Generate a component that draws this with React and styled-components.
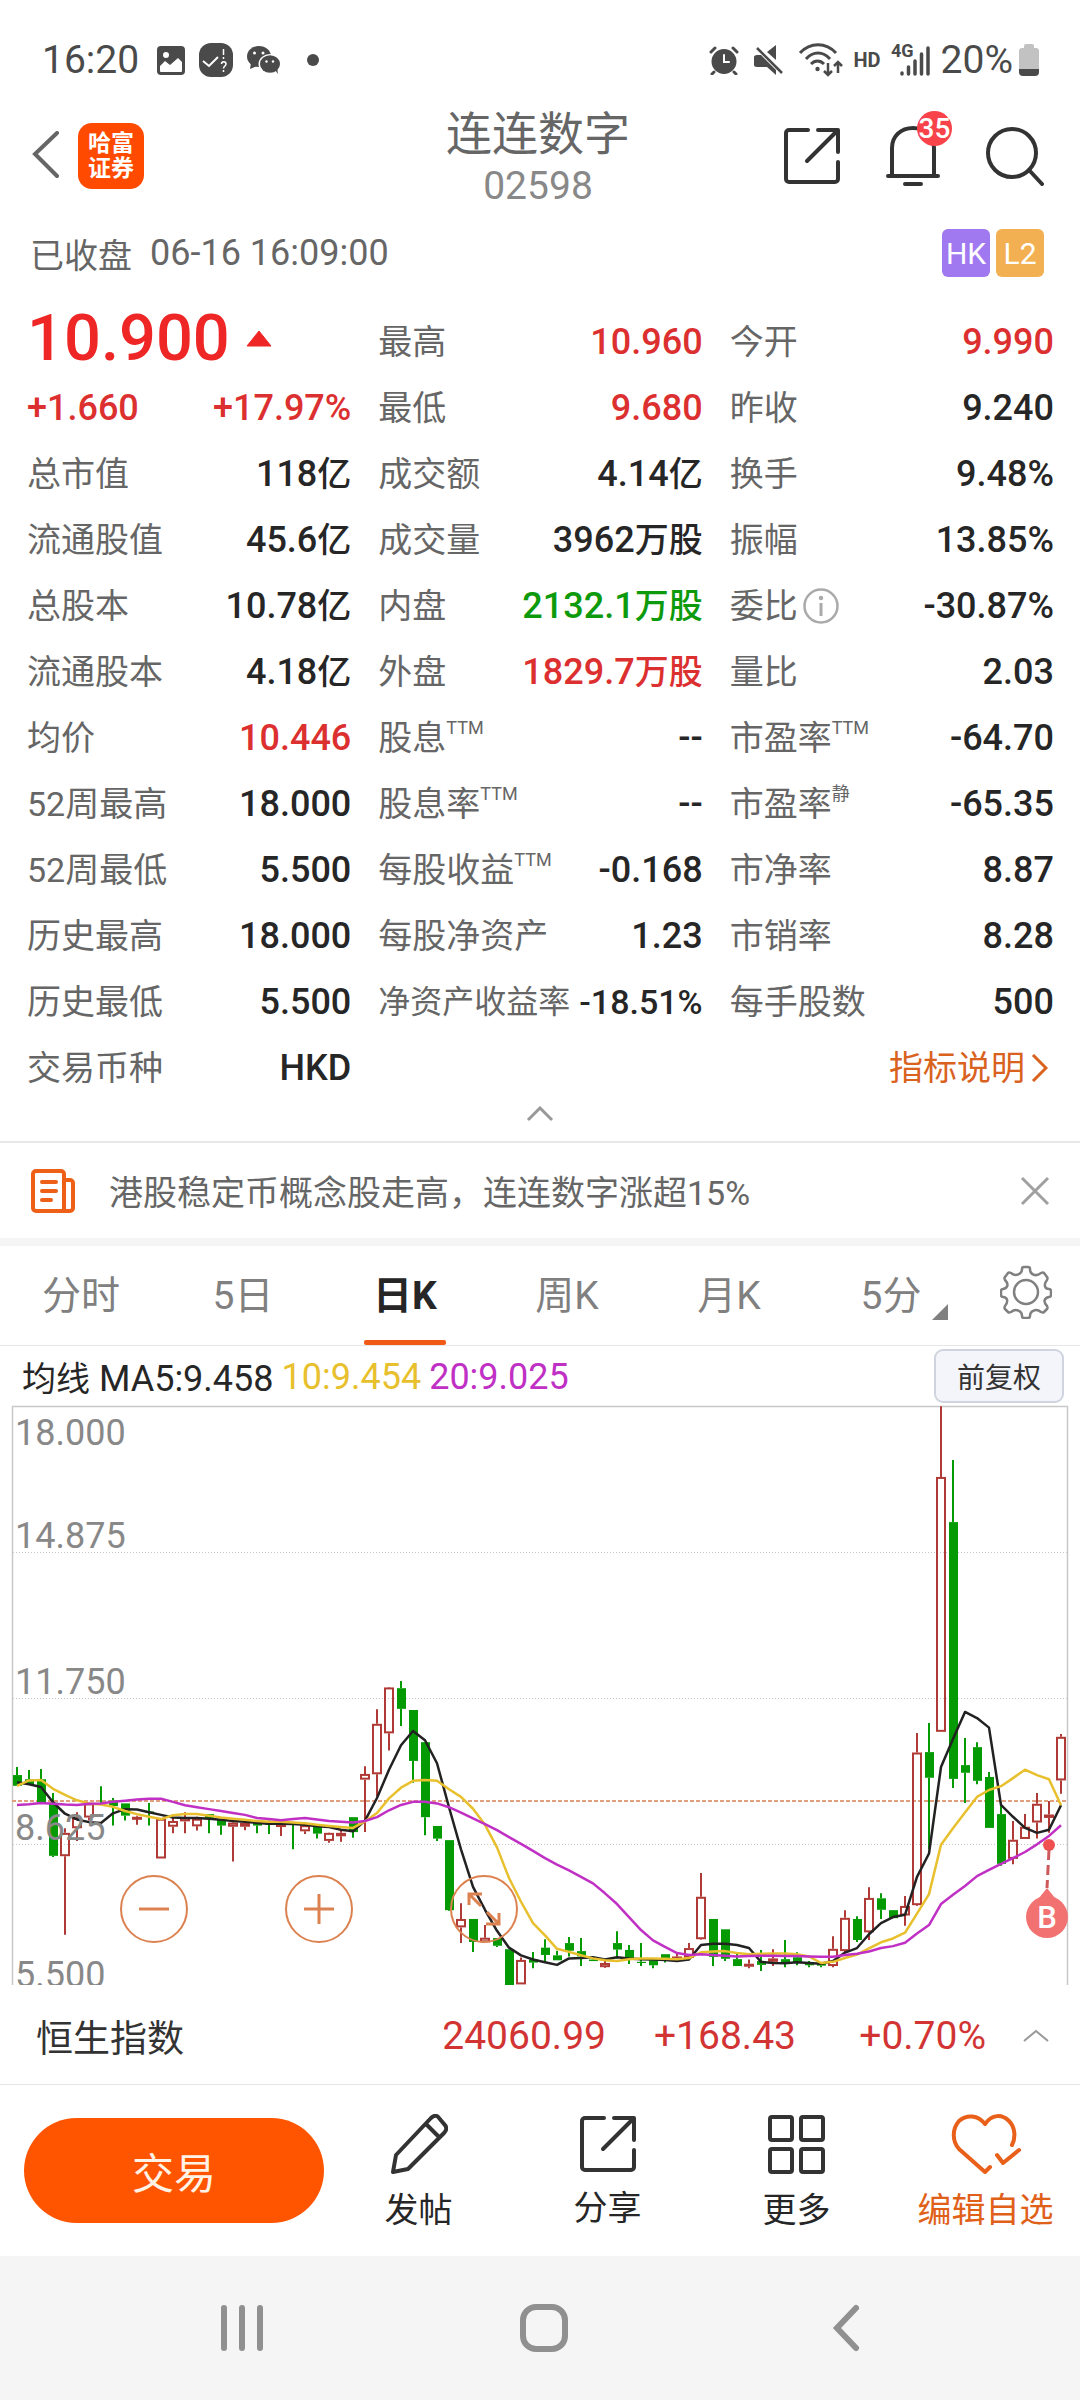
import { useState } from "react";
import styled, { createGlobalStyle } from "styled-components";

const GlobalStyle = createGlobalStyle`
  * {
    box-sizing: border-box;
  }
  body {
    margin: 0;
    background: #fff;
    color: #262626;
    font-family: Roboto, "Noto Sans CJK SC", sans-serif;
  }
  button {
    padding: 0;
    border: none;
    background: none;
    color: inherit;
    font: inherit;
    cursor: pointer;
  }
  svg {
    display: block;
  }
`;

const Page = styled.div`
  display: flex;
  flex-direction: column;
  width: 100%;
`;

const StatusBar = styled.div`
  display: flex;
  align-items: center;
  justify-content: space-between;
  height: 80px;
  padding: 40px 41px 0 42px;
  color: #4a4a4a;
  font-size: 39px;
  line-height: 40px;
`;

const StatusGroup = styled.div`
  display: flex;
  align-items: center;
  gap: ${(props) => props.$gap};
`;

const Clock = styled.span`
  margin-right: 4px;
`;

const StatusTag = styled.span`
  font-size: 20px;
  font-weight: 700;
`;

const Header = styled.header`
  display: grid;
  grid-template-columns: 1fr auto 1fr;
  align-items: center;
  height: 140px;
  padding: 12px 36px 0 32px;
`;

const HeaderSide = styled.div`
  display: flex;
  align-items: center;
  justify-content: ${(props) => (props.$end ? "flex-end" : "flex-start")};
  gap: ${(props) => (props.$end ? "46px" : "18px")};
`;

const BrokerLogo = styled.div`
  display: flex;
  align-items: center;
  justify-content: center;
  width: 66px;
  height: 66px;
  border-radius: 14px;
  background: #ff4a00;
  color: #fff;
  font-size: 23px;
  font-weight: 700;
  line-height: 25px;
  text-align: center;
`;

const Title = styled.h1`
  display: flex;
  flex-direction: column;
  align-items: center;
  margin: 0;
  padding-top: 3px;
  color: #666;
  font-size: 46px;
  font-weight: 400;
  line-height: 56px;
  & span {
    color: #888;
    font-size: 39px;
    line-height: 48px;
  }
`;

const IconButton = styled.button`
  position: relative;
  display: flex;
  align-items: center;
  justify-content: center;
`;

const Badge = styled.span`
  position: absolute;
  top: -15px;
  right: -12px;
  width: 35px;
  height: 35px;
  border-radius: 50%;
  background: #f9434b;
  color: #fff;
  font-size: 28px;
  font-weight: 500;
  line-height: 35px;
  text-align: center;
`;

const SessionRow = styled.div`
  display: flex;
  align-items: center;
  gap: 18px;
  height: 66px;
  padding: 0 36px 0 30px;
  color: #666;
  font-size: 36px;
`;

const MarketTags = styled.div`
  display: flex;
  gap: 6px;
  margin-left: auto;
`;

const MarketTag = styled.span`
  width: 48px;
  height: 48px;
  border-radius: 6px;
  background: ${(props) => props.$bg};
  color: #fff;
  font-size: 30px;
  line-height: 49px;
  text-align: center;
`;

const Cjk = styled.span`
  font-size: 34px;
`;

const QuoteGrid = styled.div`
  display: grid;
  grid-template-columns: repeat(3, 1fr);
  grid-auto-rows: 66px;
  column-gap: 27px;
  padding: 23px 26px 0 27px;
`;

const Cell = styled.div`
  display: flex;
  align-items: center;
  justify-content: space-between;
  line-height: 66px;
  white-space: nowrap;
`;

const PriceCell = styled.div`
  display: flex;
  align-items: center;
  gap: 16px;
  height: 58px;
  color: #ee2626;
  font-size: 65px;
  font-weight: 500;
  line-height: 58px;
`;

const Label = styled.span`
  display: flex;
  align-items: center;
  color: #666;
  font-size: ${(props) => (props.$small ? "32px" : "34px")};
  & sup {
    align-self: flex-start;
    font-size: 18px;
    line-height: 46px;
  }
  & svg {
    margin-left: 4px;
  }
`;

const tones = { up: "#dc3030", down: "#0d9a0d" };

const Value = styled.span`
  color: ${(props) => tones[props.$tone] || "#262626"};
  font-size: ${(props) => (props.$small ? "34px" : "36px")};
  font-weight: 500;
`;

const GuideLink = styled.a`
  display: flex;
  align-items: center;
  gap: 6px;
  margin-left: auto;
  padding-right: 6px;
  color: #d9621e;
  font-size: 34px;
  text-decoration: none;
`;

const Collapse = styled.button`
  display: flex;
  justify-content: center;
  height: 40px;
  padding-top: 5px;
`;

const News = styled.div`
  display: flex;
  align-items: center;
  height: 105px;
  padding: 0 30px;
  border-top: 2px solid #e8e8e8;
  border-bottom: 8px solid #f5f5f5;
  color: #666;
  font-size: 34px;
  & a {
    flex: 1;
    margin-left: 33px;
    color: inherit;
    text-decoration: none;
  }
`;

const Tabs = styled.nav`
  display: grid;
  grid-template-columns: repeat(6, 3fr) 2fr;
  height: 100px;
  border-bottom: 1px solid #e6e6e6;
`;

const Tab = styled.button`
  position: relative;
  padding-bottom: 8px;
  color: ${(props) => (props.$active ? "#262626" : "#808080")};
  font-size: 39px;
  font-weight: ${(props) => (props.$active ? 700 : 400)};
  &::after {
    content: "";
    position: absolute;
    left: calc(50% - 41px);
    bottom: 0;
    width: 82px;
    height: 5px;
    border-radius: 2px;
    background: ${(props) => (props.$active ? "#f05a14" : "transparent")};
  }
`;

const TabCorner = styled.svg`
  position: absolute;
  right: 24px;
  bottom: 25px;
`;

const GearButton = styled(IconButton)`
  padding-bottom: 8px;
`;

const AverageRow = styled.div`
  display: flex;
  align-items: center;
  gap: 8px;
  height: 59px;
  padding: 0 16px 0 22px;
  font-size: 36px;
`;

const Average = styled.span`
  padding-top: 2px;
  color: ${(props) => props.$color};
  white-space: nowrap;
`;

const AdjustButton = styled.button`
  width: 130px;
  height: 54px;
  margin-left: auto;
  border: 2px solid #d0d4de;
  border-radius: 9px;
  background: #f4f5fa;
  color: #333;
  font-size: 28px;
`;

const ChartBox = styled.section`
  position: relative;
`;

const ChartSvg = styled.svg`
  width: 100%;
  height: auto;
`;

const ChartControls = styled.div`
  position: absolute;
  bottom: 42px;
  left: 120px;
  display: flex;
  gap: 97px;
`;

const RoundButton = styled.button`
  display: flex;
  align-items: center;
  justify-content: center;
  width: 68px;
  height: 68px;
  border: 2px solid #dc8250;
  border-radius: 50%;
`;

const IndexBar = styled.div`
  display: grid;
  grid-template-columns: 1fr 200px 190px 190px 64px;
  align-items: center;
  height: 100px;
  padding: 2px 30px 0 36px;
  border-bottom: 1px solid #e6e6e6;
  color: #d23434;
  font-size: 39px;
  text-align: right;
`;

const IndexName = styled.span`
  color: #333;
  font-size: 37px;
  text-align: left;
`;

const IndexToggle = styled.button`
  display: flex;
  justify-content: flex-end;
`;

const BottomBar = styled.div`
  display: grid;
  grid-template-columns: 300px repeat(4, 1fr);
  align-items: center;
  height: 171px;
  padding-left: 24px;
`;

const TradeButton = styled.button`
  height: 105px;
  border-radius: 53px;
  background: #ff5500;
  color: #fff3e6;
  font-size: 42px;
`;

const Action = styled.button`
  display: flex;
  flex-direction: column;
  align-items: center;
  gap: 12px;
  padding-top: 6px;
  color: ${(props) => (props.$accent ? "#e0601a" : "#262626")};
  font-size: 34px;
  line-height: 48px;
`;

const SystemNav = styled.nav`
  display: grid;
  grid-template-columns: repeat(3, 1fr);
  height: 144px;
  padding: 0 83px 0 91px;
  background: #f5f5f5;
`;

const ImageIcon = () => (
  <svg width="28" height="29" viewBox="0 0 28 29">
    <rect width="28" height="29" rx="4" fill="#4a4a4a" />
    <circle cx="9" cy="9" r="3" fill="#fff" />
    <path d="M3 20l5-5 5 4 8-7 4 4v9a1 1 0 0 1-1 1H4a1 1 0 0 1-1-1z" fill="#fff" />
  </svg>
);

const CheckAppIcon = () => (
  <svg width="34" height="34" viewBox="0 0 34 34" fill="none" stroke="#fff">
    <rect width="34" height="34" rx="12" fill="#4a4a4a" stroke="none" />
    <path d="M4 18l6 5 9-9" strokeWidth="2" />
    <path d="M24.500 6v6M24.500 14v2M22.500 21c0-3 4.500-3 4.500 0 0 2-2.500 2-2.500 4.500M24.500 27v2" strokeWidth="1.500" />
  </svg>
);

const WechatIcon = () => (
  <svg width="34" height="28" viewBox="0 0 34 28" fill="#4a4a4a">
    <ellipse cx="12" cy="10.500" rx="12" ry="10.500" />
    <path d="M4 17l-1 6 7-3z" />
    <ellipse cx="23" cy="18" rx="11.500" ry="10" fill="#fff" />
    <ellipse cx="23" cy="18" rx="10" ry="8.800" />
    <path d="M28 24l3 4-1-7z" />
    <g fill="#fff">
      <circle cx="7.500" cy="7" r="1.500" />
      <circle cx="16" cy="7" r="1.500" />
      <circle cx="19.500" cy="15.500" r="1.200" />
      <circle cx="26" cy="15.500" r="1.200" />
    </g>
  </svg>
);

const DotIcon = () => (
  <svg width="24" height="12" viewBox="0 0 24 12">
    <circle cx="18" cy="6" r="6" fill="#4a4a4a" />
  </svg>
);

const AlarmIcon = () => (
  <svg width="30" height="29" viewBox="0 0 30 29" fill="none" strokeLinecap="round">
    <circle cx="15" cy="15.500" r="12.500" fill="#4a4a4a" />
    <path d="M2 6l4-4M28 6l-4-4M5 26l-2 2M25 26l2 2" stroke="#4a4a4a" strokeWidth="3" />
    <path d="M15 9v7h5" stroke="#fff" strokeWidth="2" />
  </svg>
);

const MuteIcon = () => (
  <svg width="30" height="30" viewBox="0 0 30 30" fill="#4a4a4a">
    <path d="M3 10h4l15 15v5l-9-8H3c-2 0-3-1-3-2v-8c0-1 1-2 3-2z" />
    <path d="M13 7l9-7v15z" />
    <path d="M3 3l25 25" stroke="#4a4a4a" strokeWidth="2.500" />
  </svg>
);

const WifiIcon = () => (
  <svg width="44" height="34" viewBox="0 0 44 34" fill="none" stroke="#4a4a4a" strokeWidth="3">
    <path d="M1 10C11-1 27-1 37 10M7 16c7-8 17-8 24 0M12 21c4-4 9-4 13 0" />
    <circle cx="18.500" cy="26" r="2.200" fill="#4a4a4a" stroke="none" />
    <path d="M29 20v12M25 28l4 4 4-4M39 30V19M35 23l4-4 4 4" strokeWidth="2.500" />
  </svg>
);

const SignalIcon = () => (
  <svg width="40" height="42" viewBox="0 -4 40 42">
    <text x="0" y="14" fontSize="18" fontWeight="700" fill="#4a4a4a">
      4G
    </text>
    <g stroke="#4a4a4a" strokeWidth="3.500" strokeLinecap="round">
      <path d="M11 31v-1M17.500 31v-7M24 31V18M30.500 31V11M37 31V5" />
    </g>
  </svg>
);

const BatteryIcon = () => (
  <svg width="20" height="32" viewBox="0 0 20 32">
    <path d="M5 4V2a2 2 0 0 1 2-2h6a2 2 0 0 1 2 2v2h2a3 3 0 0 1 3 3v18H0V7a3 3 0 0 1 3-3z" fill="#c2c2c2" />
    <path d="M0 25h20v3a4 4 0 0 1-4 4H4a4 4 0 0 1-4-4z" fill="#4a4a4a" />
  </svg>
);

const BackIcon = () => (
  <svg width="28" height="50" viewBox="0 0 28 50" fill="none" stroke="#666" strokeWidth="4" strokeLinecap="round">
    <path d="M25 2L3 23l22 22" />
  </svg>
);

const ShareIcon = () => (
  <svg width="56" height="56" viewBox="0 0 56 56" fill="none" stroke="#333" strokeWidth="4" strokeLinecap="round" strokeLinejoin="round">
    <path d="M24 2H5a3 3 0 0 0-3 3v46a3 3 0 0 0 3 3h46a3 3 0 0 0 3-3V34M34 2h20v22M53 3L23 33" />
  </svg>
);

const BellIcon = () => (
  <svg width="54" height="60" viewBox="0 0 54 60" fill="none" stroke="#333" strokeWidth="4" strokeLinecap="round">
    <path d="M6 49V22C6 10 15 2 27 2s21 8 21 20v27M2 50h50M19 58h16" />
  </svg>
);

const SearchIcon = () => (
  <svg width="58" height="60" viewBox="0 0 58 60" fill="none" stroke="#333" strokeWidth="4" strokeLinecap="round">
    <circle cx="26" cy="27" r="24" />
    <path d="M43 44l13 14" />
  </svg>
);

const InfoIcon = () => (
  <svg width="38" height="38" viewBox="0 0 38 38" fill="none" stroke="#aaa" strokeWidth="2.500">
    <circle cx="19" cy="19" r="16.500" />
    <path d="M19 16v13" strokeWidth="3" />
    <circle cx="19" cy="11" r="1" fill="#aaa" />
  </svg>
);

const NewsIcon = () => (
  <svg width="46" height="44" viewBox="0 0 46 44" fill="none" stroke="#ee5f18" strokeWidth="4" strokeLinecap="round" strokeLinejoin="round">
    <path d="M36 42H6a3 3 0 0 1-3-3V5a3 3 0 0 1 3-3h25a3 3 0 0 1 3 3v36M36 11h4a3 3 0 0 1 3 3v25a3 3 0 0 1-3 3h-4M12 13h14M12 22h14M12 31h9" />
  </svg>
);

const GearIcon = () => (
  <svg width="52" height="54" viewBox="0 0 52 54" fill="none" stroke="#808080" strokeWidth="2.500" strokeLinejoin="round">
    <circle cx="26" cy="27" r="12" />
    <path d="M22 4q0-2 2-2h4q2 0 2 2c0 6 6 8 11 4q2-1 3 0l3 4q1 1 0 3c-4 5-2 9 2 9q2 0 2 2v4q0 2-2 2c-5 1-6 5-2 9q1 2 0 3l-3 3q-1 1-3 0c-5-4-11-1-11 4q0 2-2 2h-4q-2 0-2-2c0-5-6-8-11-4q-2 1-3 0l-3-3q-1-1 0-3c4-5 2-9-2-9q-2 0-2-2v-4q0-2 2-2c5-1 6-5 2-9q-1-2 0-3l3-4q1-1 3 0c5 4 11 1 11-4z" />
  </svg>
);

const PencilIcon = () => (
  <svg width="58" height="60" viewBox="0 0 58 60" fill="none" stroke="#333" strokeWidth="4" strokeLinejoin="round">
    <path d="M41 4c3-3 6-3 8 0l5 6c3 3 3 6 0 9L18 55 3 58l3-17zM36 10l13 13" />
  </svg>
);

const GridIcon = () => (
  <svg width="58" height="60" viewBox="0 0 58 60" fill="none" stroke="#333" strokeWidth="4">
    <rect x="2" y="3" width="22" height="23" rx="2" />
    <rect x="33" y="3" width="22" height="23" rx="2" />
    <rect x="2" y="35" width="22" height="23" rx="2" />
    <rect x="33" y="35" width="22" height="23" rx="2" />
  </svg>
);

const HeartIcon = () => (
  <svg width="70" height="60" viewBox="0 0 70 60" fill="none" stroke="#e8601a" strokeWidth="4" strokeLinecap="round" strokeLinejoin="round">
    <path d="M61 31c4-8 3-18-3-24-7-7-17-7-24 3C27 1 16 0 8 7c-7 8-7 20 0 28l26 23 5-5M46 41l6 8 16-13" />
  </svg>
);

// [label, value, tone, sup, small]
const quotes = [
  ["最高", "10.960", "up"],
  ["今开", "9.990", "up"],
  null,
  ["最低", "9.680", "up"],
  ["昨收", "9.240"],
  ["总市值", "118亿"],
  ["成交额", "4.14亿"],
  ["换手", "9.48%"],
  ["流通股值", "45.6亿"],
  ["成交量", "3962万股"],
  ["振幅", "13.85%"],
  ["总股本", "10.78亿"],
  ["内盘", "2132.1万股", "down"],
  ["委比", "-30.87%"],
  ["流通股本", "4.18亿"],
  ["外盘", "1829.7万股", "up"],
  ["量比", "2.03"],
  ["均价", "10.446", "up"],
  ["股息", "--", "", "TTM"],
  ["市盈率", "-64.70", "", "TTM"],
  ["52周最高", "18.000"],
  ["股息率", "--", "", "TTM"],
  ["市盈率", "-65.35", "", "静"],
  ["52周最低", "5.500"],
  ["每股收益", "-0.168", "", "TTM"],
  ["市净率", "8.87"],
  ["历史最高", "18.000"],
  ["每股净资产", "1.23"],
  ["市销率", "8.28"],
  ["历史最低", "5.500"],
  ["净资产收益率", "-18.51%", "", "", true],
  ["每手股数", "500"],
  ["交易币种", "HKD"],
];

// Levels count down from the top edge, 381.5 to one grid step.
// [rising, high, body top, body bottom, low]
const candles = [
  [0, 985, 1006, 1034, 1034], [0, 993, 1017, 1031, 1031], [0, 990, 1017, 1078, 1078],
  [0, 1053, 1078, 1217, 1220], [1, 1145, 1157, 1218, 1423], [1, 1103, 1118, 1145, 1178],
  [1, 1080, 1080, 1117, 1125], [0, 1035, 1080, 1084, 1084], [0, 1066, 1073, 1087, 1138],
  [0, 1080, 1080, 1112, 1125], [1, 1112, 1115, 1119, 1136], [0, 1079, 1101, 1104, 1138],
  [1, 1120, 1120, 1224, 1224], [1, 1118, 1126, 1141, 1158], [1, 1103, 1116, 1127, 1158],
  [1, 1115, 1120, 1140, 1151], [0, 1108, 1108, 1118, 1158], [0, 1120, 1123, 1138, 1162],
  [1, 1122, 1130, 1141, 1232], [1, 1122, 1131, 1141, 1150], [0, 1125, 1130, 1138, 1158],
  [0, 1125, 1130, 1136, 1160], [1, 1130, 1134, 1141, 1165], [0, 1130, 1131, 1136, 1200],
  [1, 1135, 1137, 1153, 1160], [0, 1140, 1140, 1159, 1172], [1, 1156, 1157, 1178, 1183],
  [1, 1150, 1157, 1166, 1180], [0, 1116, 1116, 1155, 1170], [1, 983, 1003, 1018, 1155],
  [1, 834, 872, 1004, 1062], [1, 776, 777, 897, 942], [0, 760, 779, 833, 878],
  [0, 836, 836, 969, 1026], [0, 920, 920, 1116, 1163], [0, 1139, 1139, 1172, 1178],
  [0, 1176, 1176, 1359, 1361], [1, 1341, 1382, 1404, 1445], [0, 1382, 1382, 1442, 1468],
  [1, 1398, 1431, 1443, 1443], [0, 1432, 1432, 1452, 1455], [0, 1461, 1461, 1560, 1560],
  [1, 1483, 1489, 1553, 1553], [0, 1468, 1488, 1496, 1511], [0, 1435, 1457, 1476, 1495],
  [0, 1465, 1477, 1490, 1490], [0, 1429, 1445, 1465, 1480], [0, 1432, 1466, 1480, 1505],
  [0, 1485, 1488, 1492, 1492], [1, 1490, 1497, 1508, 1510], [0, 1414, 1445, 1462, 1485],
  [0, 1450, 1463, 1484, 1500], [0, 1445, 1494, 1497, 1505], [0, 1488, 1490, 1503, 1511],
  [0, 1474, 1474, 1486, 1496], [1, 1468, 1480, 1486, 1490], [1, 1445, 1458, 1484, 1490],
  [1, 1262, 1324, 1435, 1436], [0, 1382, 1382, 1481, 1505], [0, 1409, 1409, 1486, 1492],
  [0, 1470, 1487, 1505, 1505], [1, 1488, 1499, 1506, 1511], [0, 1463, 1492, 1502, 1518],
  [1, 1461, 1485, 1494, 1505], [0, 1437, 1487, 1496, 1508], [0, 1469, 1482, 1496, 1503],
  [0, 1492, 1496, 1503, 1508], [0, 1495, 1498, 1504, 1508], [1, 1427, 1460, 1505, 1508],
  [1, 1359, 1379, 1466, 1470], [0, 1375, 1382, 1437, 1442], [1, 1299, 1327, 1417, 1437],
  [0, 1315, 1328, 1358, 1382], [0, 1359, 1359, 1380, 1380], [1, 1322, 1348, 1373, 1400],
  [1, 896, 947, 1346, 1348], [0, 870, 946, 1013, 1200], [1, 42, 227, 893, 893],
  [0, 183, 345, 1016, 1040], [0, 909, 980, 1000, 1079], [0, 920, 933, 1021, 1030],
  [0, 998, 1011, 1144, 1144], [0, 1085, 1108, 1238, 1243], [1, 1126, 1175, 1225, 1239],
  [1, 1108, 1141, 1173, 1173], [1, 1053, 1081, 1130, 1172], [1, 1074, 1109, 1118, 1157],
  [1, 899, 906, 1020, 1055],
];

const averages = [
  {
    color: "#222",
    levels: [
      1025, 1030, 1037, 1077, 1107, 1122, 1129, 1131, 1106, 1095, 1096, 1103, 1110, 1117, 1118,
      1118, 1120, 1123, 1126, 1128, 1131, 1133, 1133, 1134, 1136, 1140, 1142, 1149, 1153, 1125,
      1066, 992, 928, 891, 915, 975, 1090, 1200, 1298, 1358, 1413, 1457, 1477, 1488, 1495, 1502,
      1485, 1484, 1482, 1488, 1482, 1485, 1487, 1488, 1489, 1492, 1488, 1450, 1447, 1447, 1450,
      1458, 1494, 1497, 1498, 1495, 1497, 1499, 1492, 1470, 1458, 1422, 1393, 1377, 1371, 1272,
      1211, 985, 912, 841, 857, 882, 1084, 1115, 1144, 1157, 1149, 1085,
    ],
  },
  {
    color: "#e8c02e",
    levels: [
      1034, 1020, 1019, 1042, 1058, 1072, 1080, 1083, 1089, 1100, 1108, 1115, 1121, 1111, 1108,
      1108, 1112, 1117, 1120, 1123, 1126, 1128, 1128, 1130, 1132, 1136, 1139, 1142, 1144, 1127,
      1105, 1067, 1039, 1021, 1019, 1021, 1043, 1063, 1094, 1136, 1195, 1275, 1337, 1393, 1425,
      1460, 1468, 1477, 1485, 1490, 1492, 1487, 1485, 1485, 1486, 1487, 1484, 1469, 1467, 1466,
      1471, 1474, 1473, 1472, 1472, 1474, 1480, 1497, 1494, 1484, 1475, 1459, 1443, 1433, 1418,
      1368, 1317, 1188, 1145, 1104, 1063, 1045, 1035, 1014, 992, 1006, 1017, 1085,
    ],
  },
  {
    color: "#c030c4",
    levels: [
      1084, 1082, 1079, 1081, 1083, 1084, 1081, 1080, 1076, 1073, 1070, 1068, 1068, 1076, 1085,
      1090, 1095, 1100, 1105, 1110, 1118, 1121, 1124, 1121, 1118, 1122, 1126, 1128, 1130, 1126,
      1116, 1098, 1084, 1076, 1076, 1080, 1090, 1104, 1119, 1134, 1150, 1168, 1186, 1204, 1223,
      1240, 1255, 1272, 1289, 1315, 1343, 1377, 1411, 1438, 1455, 1471, 1476, 1474, 1476, 1478,
      1480, 1479, 1478, 1478, 1479, 1479, 1480, 1481, 1481, 1476, 1473, 1467, 1458, 1453, 1444,
      1420, 1398, 1343, 1319, 1296, 1270, 1254, 1238, 1223, 1207, 1187, 1165, 1137,
    ],
  },
];

const axis = [
  ["18.000", 40],
  ["14.875", 143],
  ["11.750", 289],
  ["8.625", 435],
  ["5.500", 582],
];

const toX = (i) => 17 + i * 12;
const toY = (level) => (level - 39) * 0.3827;

const Candle = ({ index, data }) => {
  const [rising, high, top, bottom, low] = data;
  const x = toX(index);
  const color = rising ? "#b03a36" : "#049a04";
  const y = toY(top);
  const height = Math.max(toY(bottom) - y, 1);
  return (
    <g stroke={color} strokeWidth="2">
      <path d={`M${x} ${toY(high)}V${y}M${x} ${y + height}V${toY(low)}`} />
      {rising ? (
        <rect x={x - 4} y={y + 1} width="8" height={Math.max(height - 2, 1)} fill="none" />
      ) : (
        <rect x={x - 4} y={y} width="9" height={height} fill={color} stroke="none" />
      )}
    </g>
  );
};

const Chart = () => (
  <ChartBox>
    <ChartSvg viewBox="0 0 1080 580" role="img" aria-label="日K">
      <path d="M12.500 580V1.500H1067.500V580" fill="none" stroke="#c8c8c8" strokeWidth="1.500" />
      <path d="M13 147.500H1067M13 293.500H1067M13 439.500H1067" stroke="#c8c8c8" strokeDasharray="1 2" />
      <path d="M12 396H1067" stroke="#e0a07c" strokeWidth="2" strokeDasharray="4 2" />
      {candles.map((data, i) => (
        <Candle key={i} index={i} data={data} />
      ))}
      {averages.map((line) => (
        <polyline
          key={line.color}
          points={line.levels.map((level, i) => `${toX(i)},${toY(level)}`).join(" ")}
          fill="none"
          stroke={line.color}
          strokeWidth="2.500"
          strokeLinejoin="round"
        />
      ))}
      {axis.map(([price, y]) => (
        <text key={price} x="15" y={y} fontSize="36" fill="#888">
          {price}
        </text>
      ))}
      <circle cx="1049" cy="440" r="6" fill="#f05050" />
      <path d="M1049 445l-2 38" stroke="#cc5a5a" strokeWidth="3" strokeDasharray="10 5" />
      <path d="M1047 483l8 10h-16z" fill="#f27272" />
      <circle cx="1047" cy="512" r="21" fill="#f27272" />
      <text x="1047" y="523" fontSize="31" fontWeight="500" textAnchor="middle" fill="#fff">
        B
      </text>
    </ChartSvg>
    <ChartControls>
      <RoundButton aria-label="缩小">
        <svg width="32" height="32" stroke="#dc8250" strokeWidth="3">
          <path d="M1 16h30" />
        </svg>
      </RoundButton>
      <RoundButton aria-label="放大">
        <svg width="32" height="32" stroke="#dc8250" strokeWidth="3">
          <path d="M1 16h30M16 1v30" />
        </svg>
      </RoundButton>
      <RoundButton aria-label="全屏">
        <svg width="34" height="34" fill="none" stroke="#dc8250" strokeWidth="3">
          <path d="M2 13V2h13M2 2l12 12M32 21v11H19M32 32L20 20" />
        </svg>
      </RoundButton>
    </ChartControls>
  </ChartBox>
);

const QuoteCell = ({ label, value, tone, sup, small }) => {
  const [, number, unit] = value.match(/^([^万亿]*)(.*)$/);
  return (
    <Cell>
      <Label $small={small}>
        {label}
        {sup && <sup>{sup}</sup>}
        {label === "委比" && <InfoIcon />}
      </Label>
      <Value $tone={tone} $small={small}>
        {number}
        {unit && <Cjk>{unit}</Cjk>}
      </Value>
    </Cell>
  );
};

const App = () => {
  const [activeTab, setActiveTab] = useState("日K");

  return (
    <Page>
      <GlobalStyle />
      <StatusBar>
        <StatusGroup $gap="14px">
          <Clock>16:20</Clock>
          <ImageIcon />
          <CheckAppIcon />
          <WechatIcon />
          <DotIcon />
        </StatusGroup>
        <StatusGroup $gap="10px">
          <StatusGroup $gap="15px">
            <AlarmIcon />
            <MuteIcon />
            <WifiIcon />
          </StatusGroup>
          <StatusTag>HD</StatusTag>
          <SignalIcon />
          <StatusGroup $gap="6px">
            <span>20%</span>
            <BatteryIcon />
          </StatusGroup>
        </StatusGroup>
      </StatusBar>

      <Header>
        <HeaderSide>
          <IconButton aria-label="返回">
            <BackIcon />
          </IconButton>
          <BrokerLogo>
            哈富
            <br />
            证券
          </BrokerLogo>
        </HeaderSide>
        <Title>
          连连数字
          <span>02598</span>
        </Title>
        <HeaderSide $end>
          <IconButton aria-label="分享">
            <ShareIcon />
          </IconButton>
          <IconButton aria-label="消息">
            <BellIcon />
            <Badge>35</Badge>
          </IconButton>
          <IconButton aria-label="搜索">
            <SearchIcon />
          </IconButton>
        </HeaderSide>
      </Header>

      <SessionRow>
        <Cjk>已收盘</Cjk>
        <span>06-16 16:09:00</span>
        <MarketTags>
          <MarketTag $bg="#a078f0">HK</MarketTag>
          <MarketTag $bg="#f2b052">L2</MarketTag>
        </MarketTags>
      </SessionRow>

      <QuoteGrid>
        <PriceCell>
          10.900
          <svg width="26" height="17" viewBox="0 0 26 17">
            <path d="M13 1l12 15H1z" fill="#ee2626" stroke="#ee2626" strokeLinejoin="round" />
          </svg>
        </PriceCell>
        {quotes.map((quote, i) =>
          quote ? (
            <QuoteCell
              key={i}
              label={quote[0]}
              value={quote[1]}
              tone={quote[2]}
              sup={quote[3]}
              small={quote[4]}
            />
          ) : (
            <Cell key={i}>
              <Value $tone="up">+1.660</Value>
              <Value $tone="up">+17.97%</Value>
            </Cell>
          )
        )}
        <Cell />
        <Cell>
          <GuideLink href="#guide">
            指标说明
            <svg width="17" height="28" fill="none" stroke="#d9621e" strokeWidth="3">
              <path d="M2 1l13 13L2 27" />
            </svg>
          </GuideLink>
        </Cell>
      </QuoteGrid>
      <Collapse aria-label="收起">
        <svg width="28" height="16" fill="none" stroke="#999" strokeWidth="3">
          <path d="M2 14L14 2l12 12" />
        </svg>
      </Collapse>

      <News>
        <NewsIcon />
        <a href="#news">港股稳定币概念股走高，连连数字涨超15%</a>
        <IconButton aria-label="关闭">
          <svg width="30" height="30" stroke="#a0a0a0" strokeWidth="3">
            <path d="M2 2l26 26M28 2L2 28" />
          </svg>
        </IconButton>
      </News>

      <Tabs>
        {["分时", "5日", "日K", "周K", "月K", "5分"].map((name) => (
          <Tab key={name} $active={name === activeTab} onClick={() => setActiveTab(name)}>
            {name}
            {name === "5分" && (
              <TabCorner width="16" height="16">
                <path d="M16 0v16H0z" fill="#808080" />
              </TabCorner>
            )}
          </Tab>
        ))}
        <GearButton aria-label="设置">
          <GearIcon />
        </GearButton>
      </Tabs>

      <AverageRow>
        <Average>
          <Cjk>均线</Cjk> MA5:9.458
        </Average>
        <Average $color="#e8c02e">10:9.454</Average>
        <Average $color="#c030c4">20:9.025</Average>
        <AdjustButton>前复权</AdjustButton>
      </AverageRow>
      <Chart />

      <IndexBar>
        <IndexName>恒生指数</IndexName>
        <span>24060.99</span>
        <span>+168.43</span>
        <span>+0.70%</span>
        <IndexToggle aria-label="展开">
          <svg width="28" height="14" fill="none" stroke="#999" strokeWidth="2">
            <path d="M2 12L14 2l12 10" />
          </svg>
        </IndexToggle>
      </IndexBar>

      <BottomBar>
        <TradeButton>交易</TradeButton>
        <Action>
          <PencilIcon />
          发帖
        </Action>
        <Action>
          <ShareIcon />
          分享
        </Action>
        <Action>
          <GridIcon />
          更多
        </Action>
        <Action $accent>
          <HeartIcon />
          编辑自选
        </Action>
      </BottomBar>

      <SystemNav>
        <IconButton aria-label="最近任务">
          <svg width="44" height="48" stroke="#909090" strokeWidth="6" strokeLinecap="round">
            <path d="M4 4v40M22 4v40M40 4v40" />
          </svg>
        </IconButton>
        <IconButton aria-label="主屏幕">
          <svg width="50" height="50" fill="none" stroke="#909090" strokeWidth="6">
            <rect x="4" y="4" width="42" height="42" rx="13" />
          </svg>
        </IconButton>
        <IconButton aria-label="后退">
          <svg width="28" height="48" fill="none" stroke="#909090" strokeWidth="6" strokeLinecap="round">
            <path d="M24 4L5 24l19 20" />
          </svg>
        </IconButton>
      </SystemNav>
    </Page>
  );
};

export default App;
